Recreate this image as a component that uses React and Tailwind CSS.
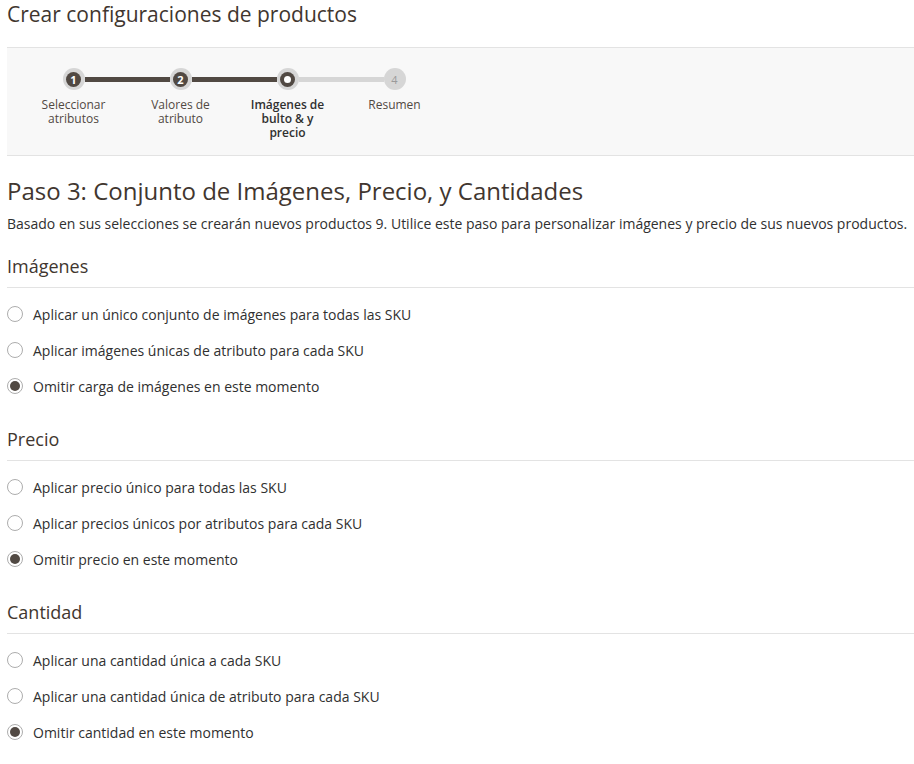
import { useState } from 'react'

const steps = [
  { n: 1, label: ['Seleccionar', 'atributos'], state: 'done' },
  { n: 2, label: ['Valores de', 'atributo'], state: 'done' },
  { n: 3, label: ['Imágenes de', 'bulto & y', 'precio'], state: 'current' },
  { n: 4, label: ['Resumen'], state: 'todo' }
]

const sections = [
  {
    title: 'Imágenes',
    name: 'images',
    options: [
      'Aplicar un único conjunto de imágenes para todas las SKU',
      'Aplicar imágenes únicas de atributo para cada SKU',
      'Omitir carga de imágenes en este momento'
    ]
  },
  {
    title: 'Precio',
    name: 'price',
    options: [
      'Aplicar precio único para todas las SKU',
      'Aplicar precios únicos por atributos para cada SKU',
      'Omitir precio en este momento'
    ]
  },
  {
    title: 'Cantidad',
    name: 'qty',
    options: [
      'Aplicar una cantidad única a cada SKU',
      'Aplicar una cantidad única de atributo para cada SKU',
      'Omitir cantidad en este momento'
    ]
  }
]

const StepDot = ({ step }) => {
  if (step.state === 'done') {
    return (
      <div className="w-[22px] h-[22px] rounded-full bg-[#d6d6d6] flex items-center justify-center shrink-0">
        <div className="w-[15px] h-[15px] rounded-full bg-[#514943] text-white text-[11px] font-bold leading-none flex items-center justify-center">
          {step.n}
        </div>
      </div>
    )
  }
  if (step.state === 'current') {
    return (
      <div className="w-[22px] h-[22px] rounded-full bg-[#d6d6d6] flex items-center justify-center shrink-0">
        <div className="w-[15px] h-[15px] rounded-full bg-[#514943] flex items-center justify-center">
          <div className="w-[7px] h-[7px] rounded-full bg-white" />
        </div>
      </div>
    )
  }
  return (
    <div className="w-[22px] h-[22px] rounded-full bg-[#d6d6d6] flex items-center justify-center shrink-0 text-[11px] text-[#9a9a9a] leading-none">
      {step.n}
    </div>
  )
}

const Radio = ({ checked }) => (
  <span className="w-[16px] h-[16px] rounded-full border border-[#adadad] bg-white flex items-center justify-center shrink-0">
    {checked && <span className="w-[10px] h-[10px] rounded-full bg-[#514943]" />}
  </span>
)

const Section = ({ section, first }) => {
  const [value, setValue] = useState(section.options.length - 1)
  return (
    <div className={first ? 'mt-[20px]' : 'mt-[23px]'}>
      <h3 className="text-[18px] leading-[24px] text-[#41362f] pb-[9px] border-b border-[#e3e3e3]">
        {section.title}
      </h3>
      <div className="mt-[8px]">
        {section.options.map((opt, i) => (
          <label
            key={opt}
            onClick={() => setValue(i)}
            className="h-[36px] flex items-center gap-[10px] text-[14px] text-[#303030] cursor-pointer"
          >
            <Radio checked={value === i} />
            <span>{opt}</span>
          </label>
        ))}
      </div>
    </div>
  )
}

export default function App() {
  return (
    <div className="pl-[7px] pb-[20px] bg-white font-['Open_Sans',sans-serif] text-[#303030]">
      <h1 className="text-[21px] leading-[28px] text-[#41362f]">Crear configuraciones de productos</h1>

      <div className="mt-[19px] bg-[#f8f8f8] border-y border-[#e3e3e3] pt-[20px] pb-[15px] pl-[13px]">
        <div className="flex">
          {steps.map((step, i) => (
            <div key={step.n} className="w-[107px] flex flex-col items-center">
              <div className="w-full flex items-center">
                <div
                  className={
                    'flex-1 h-[5px] ' +
                    (i === 0 ? 'bg-transparent' : step.state === 'todo' ? 'bg-[#d6d6d6]' : 'bg-[#514943]')
                  }
                />
                <StepDot step={step} />
                <div
                  className={
                    'flex-1 h-[5px] ' +
                    (i === steps.length - 1 ? 'bg-transparent' : step.state === 'done' ? 'bg-[#514943]' : 'bg-[#d6d6d6]')
                  }
                />
              </div>
              <div
                className={
                  'mt-[8px] text-center text-[12px] leading-[14px] ' +
                  (step.state === 'current' ? 'font-semibold text-[#303030]' : 'text-[#514943]')
                }
              >
                {step.label.map(l => (
                  <div key={l}>{l}</div>
                ))}
              </div>
            </div>
          ))}
        </div>
      </div>

      <h2 className="mt-[20px] text-[24px] leading-[30px] text-[#41362f]">
        Paso 3: Conjunto de Imágenes, Precio, y Cantidades
      </h2>
      <p className="mt-[8px] text-[14px] leading-[20px] text-[#303030]">
        Basado en sus selecciones se crearán nuevos productos 9. Utilice este paso para personalizar imágenes y precio de sus nuevos productos.
      </p>

      {sections.map((s, i) => (
        <Section key={s.name} section={s} first={i === 0} />
      ))}
    </div>
  )
}
